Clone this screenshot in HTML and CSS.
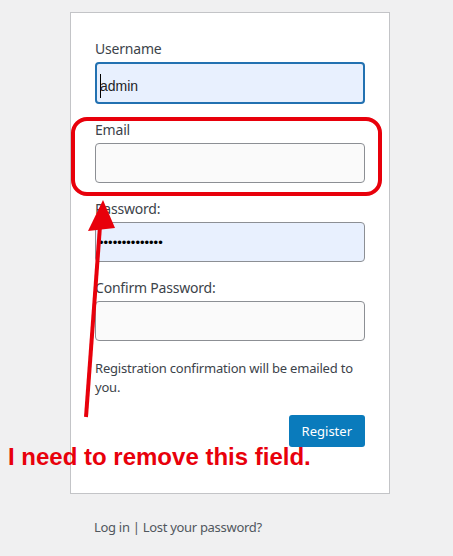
FILE: index.html
```
<!DOCTYPE html>
<html>
<head>
<meta charset="utf-8">
<link rel="stylesheet" href="styles.css">
</head>
<body>

<div class="login">
	<form class="card">
		<p class="field">
			<label>Username</label>
			<span class="input focus autofill"><span class="caret"></span>admin</span>
		</p>
		<p class="field">
			<label>Email</label>
			<span class="input"></span>
		</p>
		<p class="field">
			<label>Password:</label>
			<span class="input autofill dots">&bull;&bull;&bull;&bull;&bull;&bull;&bull;&bull;&bull;&bull;&bull;&bull;&bull;&bull;</span>
		</p>
		<p class="field">
			<label>Confirm Password:</label>
			<span class="input"></span>
		</p>
		<p class="notice">Registration confirmation will be emailed to you.</p>
		<p class="submit"><span class="button">Register</span></p>
	</form>
	<p class="nav"><a>Log in</a> | <a>Lost your password?</a></p>
</div>

<svg class="markup" width="453" height="556" viewBox="0 0 453 556">
	<rect x="73" y="119" width="307" height="75" rx="14" fill="none" stroke="#e8000b" stroke-width="4"/>
	<line x1="86" y1="417" x2="100" y2="226" stroke="#e8000b" stroke-width="4"/>
	<polygon points="103,200 88,231 115,228" fill="#e8000b"/>
</svg>
<div class="callout">I need to remove this field.</div>

</body>
</html>
```
FILE: styles.css
```
html
{
	background: #f0f0f1;
}

body
{
	margin: 0;
	font-family: "Noto Sans", "Open Sans", sans-serif;
	color: #3c434a;
	position: relative;
	height: 556px;
	overflow: hidden;
}

.login
{
	width: 320px;
	margin: 12px 0 0 70px;
}

.card
{
	display: block;
	background: #fff;
	border: 1px solid #c3c4c7;
	padding: 26px 24px 46px;
	margin: 0;
}

.field
{
	margin: 0 0 16px;
}

.field label
{
	display: block;
	font-size: 14px;
	line-height: 20px;
	margin-bottom: 3px;
	letter-spacing: -0.2px;
}

.input
{
	display: flex;
	align-items: center;
	box-sizing: border-box;
	height: 40px;
	padding: 0 7px;
	background: #fafafa;
	border: 1px solid #8c8f94;
	border-radius: 4px;
	font-family: "Liberation Sans", sans-serif;
	font-size: 14px;
	color: #1d2327;
}

.autofill
{
	background: #e8f0fe;
}

.focus
{
	border: 2px solid #2271b1;
	padding: 6px 3px 0;
	height: 42px;
}

.caret
{
	display: inline-block;
	width: 1px;
	height: 24px;
	background: #000;
	margin-right: -1px;
}

.dots
{
	font-size: 13px;
	padding-left: 3px;
	color: #000;
}

.notice
{
	font-size: 13px;
	line-height: 19px;
	letter-spacing: -0.2px;
	margin: 18px 0 18px;
}

.submit
{
	display: flex;
	justify-content: flex-end;
	margin: 0;
}

.button
{
	background: #0a7bbc;
	color: #fff;
	font-size: 13px;
	line-height: 32px;
	padding: 0 13px;
	border-radius: 3px;
}

.nav
{
	margin: 24px 0 0 24px;
	font-size: 13px;
	letter-spacing: -0.3px;
	color: #50575e;
}

.markup
{
	position: absolute;
	left: 0;
	top: 0;
}

.callout
{
	position: absolute;
	left: 8px;
	top: 443px;
	font-family: "Liberation Sans", sans-serif;
	font-weight: bold;
	font-size: 24px;
	color: #e8000b;
}
```
